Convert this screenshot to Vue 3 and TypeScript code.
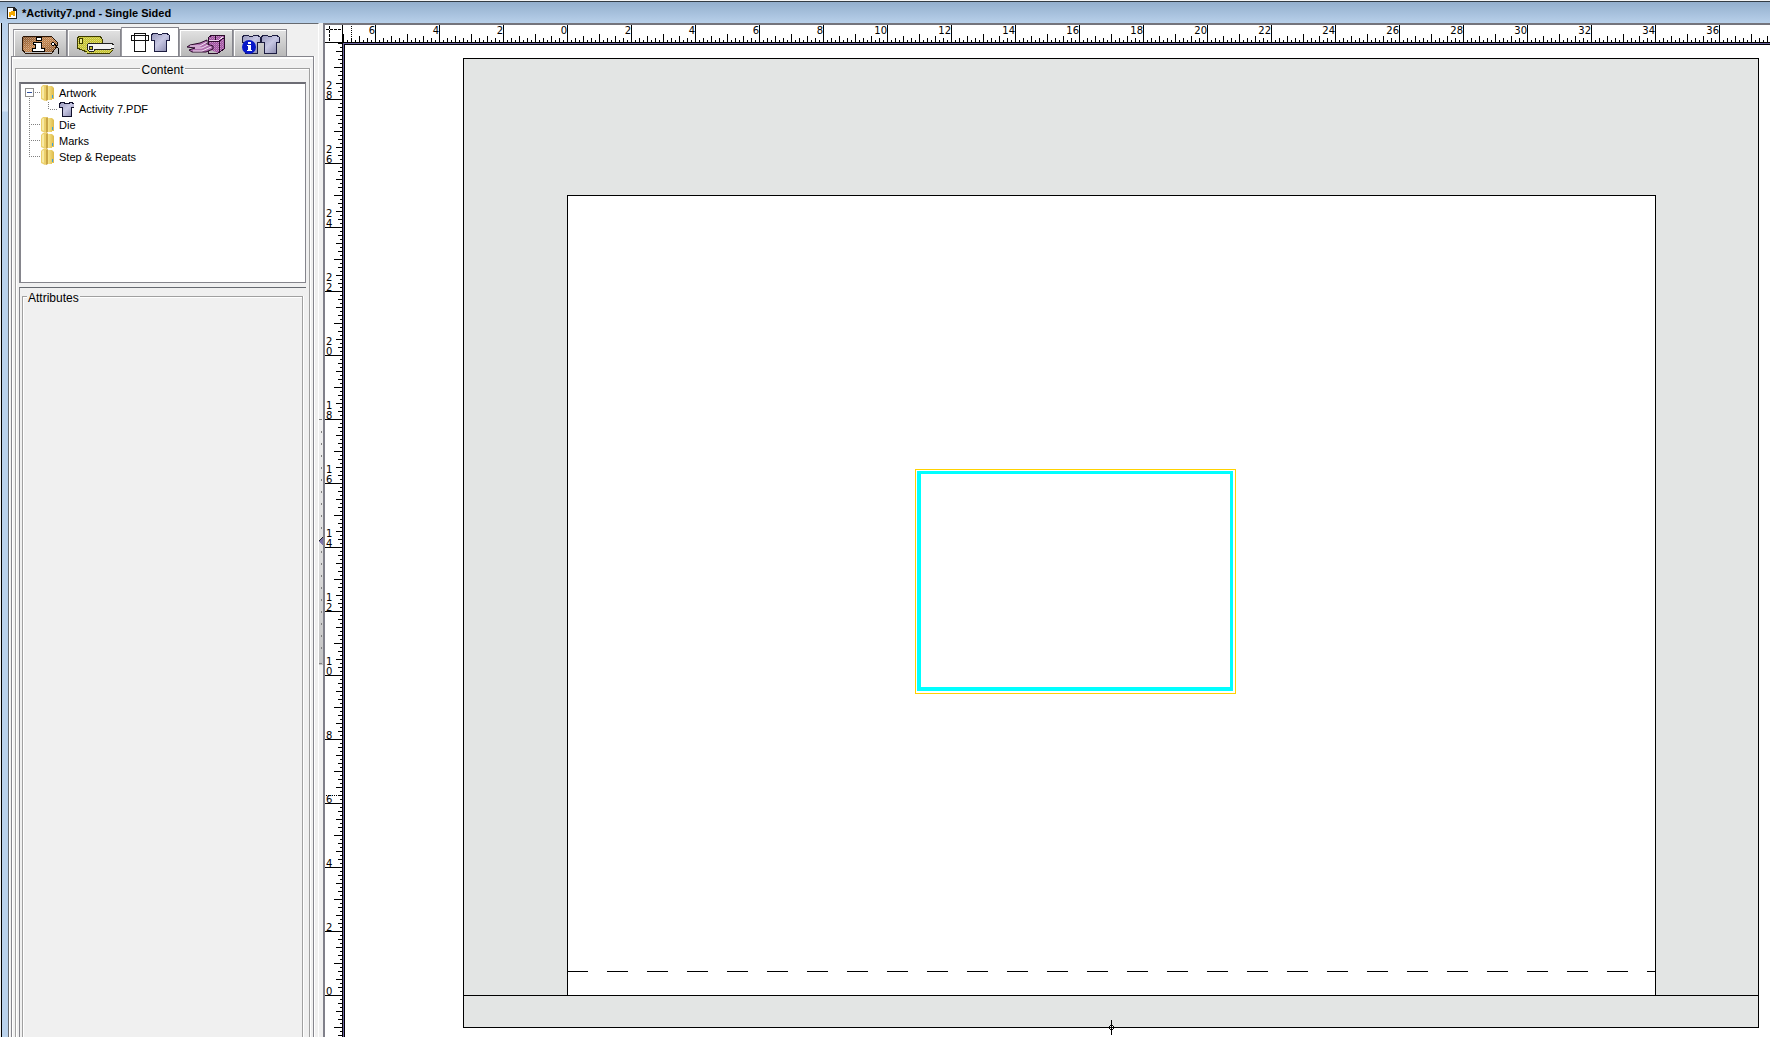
<script setup lang="ts">
import { computed, onBeforeUnmount, onMounted, ref } from 'vue'

interface Tick {
  pos: number
  len: number
  label: string
}

const INCH = 32
const STEP = INCH / 8

const viewW = ref(window.innerWidth)
const viewH = ref(window.innerHeight)

function onResize(): void {
  viewW.value = window.innerWidth
  viewH.value = window.innerHeight
}
onMounted(() => window.addEventListener('resize', onResize))
onBeforeUnmount(() => window.removeEventListener('resize', onResize))

const RULER_LEFT = 343
const RULER_TOP = 43
const ORIGIN_X = 224
const ORIGIN_Y = 952

function tickLength(eighths: number): number {
  if (eighths % 16 === 0) return 17
  if (eighths % 8 === 0) return 8
  if (eighths % 4 === 0) return 6
  if (eighths % 2 === 0) return 4
  return 2
}

function buildTicks(origin: number, extent: number, direction: 1 | -1): Tick[] {
  const ticks: Tick[] = []
  for (let pos = origin % STEP; pos < extent; pos += STEP) {
    const n = Math.abs(Math.round(((pos - origin) * direction) / STEP))
    ticks.push({ pos, len: tickLength(n), label: n % 16 === 0 ? String(n / 8) : '' })
  }
  return ticks
}

const hTicks = computed(() => buildTicks(ORIGIN_X, viewW.value - RULER_LEFT, 1))
const vTicks = computed(() => buildTicks(ORIGIN_Y, viewH.value - RULER_TOP, -1))
const hLabels = computed(() => hTicks.value.filter((t) => t.label))
const vLabels = computed(() =>
  vTicks.value
    .filter((t) => t.label)
    .flatMap((t) =>
      t.label.split('').map((digit, i, all) => ({
        key: `${t.pos}-${i}`,
        digit,
        y: t.pos - (all.length - 1 - i) * 10,
      })),
    ),
)

const folders = ['Die', 'Marks', 'Step & Repeats']
const grips = Array.from({ length: 19 }, (_, i) => 12 + i * 12)
const activeTab = ref(2)
const tabs = ['Job info', 'Media', 'Content', 'Packing', 'Content info']
</script>

<template>
  <div class="window">
    <svg width="0" height="0" class="defs" aria-hidden="true">
      <defs>
        <pattern id="dots" width="2" height="2" patternUnits="userSpaceOnUse">
          <rect width="1" height="1" fill="#fff" opacity="0.4" />
          <rect x="1" y="1" width="1" height="1" fill="#fff" opacity="0.2" />
        </pattern>
        <linearGradient id="brown" x1="0" y1="0" x2="1" y2="1">
          <stop offset="0" stop-color="#7c4a22" />
          <stop offset="0.5" stop-color="#c08048" />
          <stop offset="1" stop-color="#8a5428" />
        </linearGradient>
        <linearGradient id="shirtfill" x1="0" y1="0" x2="1" y2="1">
          <stop offset="0" stop-color="#9494b8" />
          <stop offset="0.5" stop-color="#c8c8e4" />
          <stop offset="1" stop-color="#8484a8" />
        </linearGradient>
        <linearGradient id="gold" x1="0" y1="0" x2="1" y2="0">
          <stop offset="0" stop-color="#f8e68c" />
          <stop offset="1" stop-color="#dcb848" />
        </linearGradient>
        <symbol id="shirt" viewBox="0 0 20 20">
          <g shape-rendering="crispEdges">
            <path d="M4 1H7L8 2H12L13 1H16L19 3V8H16V19H4V8H1V3Z" fill="url(#shirtfill)" />
            <path d="M4 1H7L8 2H12L13 1H16L19 3V8H16V19H4V8H1V3Z" fill="none" stroke="#1c1c40" />
          </g>
        </symbol>
        <symbol id="folder" viewBox="0 0 13 16">
          <path d="M0 2L2 0H6V15L4 16L0 14Z" fill="#ecd06c" />
          <path d="M1 2L3 1V14L1 13Z" fill="#f8eaa4" />
          <path d="M5 1L7 0V15L5 16Z" fill="#c9a546" />
          <path d="M7 1H11L13 3V14H11V15H7Z" fill="url(#gold)" />
          <path d="M11 10H12V13H11Z" fill="#3aa0e0" />
        </symbol>
      </defs>
    </svg>

    <header class="titlebar">
      <svg class="doc" width="10" height="12" viewBox="0 0 10 12" shape-rendering="crispEdges">
        <path d="M0 0H7L10 3V12H0Z" fill="#222" />
        <path d="M1 1H6V4H9V11H1Z" fill="#fff" />
        <path d="M2 5H4V4H8V9H6V8H4V10H2Z" fill="#f5a800" />
      </svg>
      <h1>*Activity7.pnd - Single Sided</h1>
    </header>

    <main class="body">
      <div class="frame"></div>

      <aside class="side">
        <nav class="tabs" role="tablist">
          <button
            v-for="(name, i) in tabs"
            :key="name"
            type="button"
            role="tab"
            class="tab"
            :class="{ active: activeTab === i }"
            :aria-label="name"
            :aria-selected="activeTab === i"
            @click="activeTab = i"
          >
            <svg v-if="i === 0" width="40" height="20" viewBox="0 0 40 20">
              <path d="M3 2H31L37 8V12L32 18H5L2 15V5Z" fill="url(#brown)" />
              <path d="M3 2H31L37 8V12L32 18H5L2 15V5Z" fill="url(#dots)" />
              <g shape-rendering="crispEdges">
                <path d="M2 15V4L4 2H31L37 8V12L32 19H5Z" fill="none" stroke="#2a1608" />
                <path d="M16 3H21V6H16ZM13 8H21V14H24V17H12V14H15V10H13Z" fill="#fff" stroke="#000" />
                <path d="M33 8L35 10L33 12L31 10Z" fill="#fff" stroke="#000" />
                <path d="M35 10L38 14L39 20" fill="none" stroke="#000" />
              </g>
            </svg>
            <svg v-else-if="i === 1" width="40" height="20" viewBox="0 0 40 20">
              <path d="M5 2H26L28 5V9H36L38 12V17L36 19H12L10 16H7L3 13V5Z" fill="#c4c22c" />
              <path d="M5 2H26L28 5V9H36L38 12V17L36 19H12L10 16H7L3 13V5Z" fill="url(#dots)" />
              <g shape-rendering="crispEdges">
                <path d="M5 2H26L28 5V9M13 19H36L39 16M3 5V14L13 18M5 2L3 5M8 4V10" fill="none" stroke="#3c3c00" />
                <path d="M5 4H8V9H5Z" fill="#eeee90" stroke="#3c3c00" />
                <path d="M15 9H37L40 11V14L37 15H21L20 17H15L13 15V11Z" fill="#f2f2f2" stroke="#222" />
                <path d="M15 12H18V15H15Z" fill="#c9c832" stroke="#222" />
              </g>
            </svg>
            <svg v-else-if="i === 2" width="40" height="20" viewBox="0 0 40 20">
              <g fill="none" stroke="#111" shape-rendering="crispEdges">
                <path d="M4 1H15V19H4ZM1 3H18V8H1Z" />
              </g>
              <use href="#shirt" x="20" y="0" width="20" height="20" />
            </svg>
            <svg v-else-if="i === 3" width="40" height="20" viewBox="0 0 40 20">
              <path d="M22 4L26 1H38V15L32 19L22 15Z" fill="#a050a0" />
              <path d="M22 4L26 1H38V15L32 19L22 15Z" fill="url(#dots)" />
              <g shape-rendering="crispEdges">
                <path d="M22 4L26 1H38V15L32 19H22Z" fill="none" stroke="#2c0c2c" />
                <path d="M22 7H33L38 4M33 7V19M29 1V7" fill="none" stroke="#2c0c2c" />
                <path d="M23 6H33L37 3" fill="none" stroke="#f0d8f0" />
              </g>
              <path d="M4 11L14 9L21 6V10L27 12V15L20 18H6L3 16L9 14L1 13Z" fill="#b070b0" stroke="#2c0c2c" />
              <path d="M4 12H14L21 8M9 14H16L22 11M7 17H16L25 13" fill="none" stroke="#f4e4f4" />
            </svg>
            <svg v-else width="40" height="20" viewBox="0 0 40 20">
              <use href="#shirt" x="1" y="0" width="20" height="20" />
              <use href="#shirt" x="20" y="0" width="20" height="20" />
              <circle cx="9" cy="13" r="7" fill="#0818c8" />
              <path d="M8 8H11V10H8ZM7 11H11V16H12V17H7V16H8V12H7Z" fill="#fff" shape-rendering="crispEdges" />
            </svg>
          </button>
        </nav>

        <section class="panel">
          <fieldset class="group content">
            <legend>Content</legend>
            <ul class="tree">
              <li>
                <svg width="20" height="16" shape-rendering="crispEdges">
                  <rect x="4" y="3" width="9" height="9" fill="#8c8c8c" />
                  <rect x="5" y="4" width="7" height="7" fill="#fff" />
                  <rect x="6" y="7" width="5" height="1" fill="#3050a0" />
                  <rect v-for="x in [14, 16, 18]" :key="x" :x="x" y="7" width="1" height="1" fill="#808080" />
                  <rect v-for="y in [13, 15]" :key="y" x="8" :y="y" width="1" height="1" fill="#808080" />
                </svg>
                <svg width="13" height="16"><use href="#folder" /></svg>
                <span>Artwork</span>
              </li>
              <li>
                <svg width="37" height="16" shape-rendering="crispEdges">
                  <rect v-for="y in 8" :key="y" x="8" :y="y * 2 - 1" width="1" height="1" fill="#808080" />
                  <rect v-for="y in 4" :key="y" x="27" :y="y * 2 - 1" width="1" height="1" fill="#808080" />
                  <rect v-for="x in 4" :key="x" :x="27 + x * 2" y="8" width="1" height="1" fill="#808080" />
                </svg>
                <svg width="16" height="16" viewBox="0 0 16 16" shape-rendering="crispEdges">
                  <path
                    d="M4 1H6V2H11V1H13L16 3V6H13V15H4V6H1V3Z"
                    fill="url(#shirtfill)"
                    stroke="#10102c"
                  />
                </svg>
                <span>Activity 7.PDF</span>
              </li>
              <li v-for="(name, i) in folders" :key="name">
                <svg width="20" height="16" shape-rendering="crispEdges">
                  <rect
                    v-for="y in i === 2 ? 4 : 8"
                    :key="y"
                    x="8"
                    :y="y * 2 - 1"
                    width="1"
                    height="1"
                    fill="#808080"
                  />
                  <rect v-for="x in 5" :key="x" :x="8 + x * 2" y="7" width="1" height="1" fill="#808080" />
                </svg>
                <svg width="13" height="16"><use href="#folder" /></svg>
                <span>{{ name }}</span>
              </li>
            </ul>
            <div class="attrs">
              <fieldset class="group inner">
                <legend>Attributes</legend>
              </fieldset>
            </div>
          </fieldset>
        </section>
      </aside>

      <div class="splitter">
        <svg width="4" height="246" shape-rendering="crispEdges">
          <defs>
            <linearGradient id="slide" x1="0" y1="0" x2="0" y2="1">
              <stop offset="0" stop-color="#f0f0f0" />
              <stop offset="0.5" stop-color="#e0e0e0" />
              <stop offset="1" stop-color="#c4c4c4" />
            </linearGradient>
          </defs>
          <rect width="4" height="246" fill="url(#slide)" />
          <path d="M0 0H3V1H0ZM0 244H3V245H0Z" fill="#808080" />
          <rect v-for="y in grips" :key="y" x="2" :y="y" width="1" height="2" fill="#808080" />
          <path d="M4 118V127L0 123Z" fill="#7c74a8" />
          <path d="M3 118H4V119H3ZM2 119H3V120H2ZM1 120H2V121H1ZM0 121H1V122H0Z" fill="#222" />
        </svg>
      </div>

      <section class="editor">
        <svg class="corner" width="18" height="18" shape-rendering="crispEdges">
          <path d="M4.500 1V17" stroke="#000" stroke-dasharray="3 1" />
          <path d="M1 4.500H17" stroke="#000" stroke-dasharray="3 1" />
          <path d="M17 0H18V18H0V17H17Z" />
        </svg>
        <svg class="hruler" width="100%" height="18" shape-rendering="crispEdges">
          <rect v-for="t in hTicks" :key="t.pos" :x="t.pos" :y="17 - t.len" width="1" :height="t.len" />
          <rect v-for="n in 8" :key="n" x="8" :y="n * 2 - 1" width="1" height="1" />
          <rect x="0" y="17" width="100%" height="1" />
          <text v-for="t in hLabels" :key="t.pos" :x="t.pos" y="9" text-anchor="end">{{ t.label }}</text>
        </svg>
        <svg class="vruler" width="18" height="100%" shape-rendering="crispEdges">
          <rect v-for="t in vTicks" :key="t.pos" :x="17 - t.len" :y="t.pos" :width="t.len" height="1" />
          <rect v-for="n in 8" :key="n" :x="n * 2 - 1" y="752" width="1" height="1" />
          <rect x="17" y="0" width="1" height="100%" />
          <text v-for="l in vLabels" :key="l.key" x="1" :y="l.y">{{ l.digit }}</text>
        </svg>
        <div class="canvas">
          <div class="plate">
            <div class="sheet">
              <svg class="gripper" width="100%" height="1" shape-rendering="crispEdges">
                <path d="M-1 0H4000" stroke="#000" stroke-width="2" stroke-dasharray="21 19" />
              </svg>
            </div>
            <div class="tail"></div>
            <div class="artwork"><div class="bleed"></div></div>
            <svg class="center" width="7" height="15" viewBox="0 0 7 15" shape-rendering="crispEdges">
              <path d="M2 5H5V6H6V9H5V10H2V9H1V6H2Z" />
              <path d="M2 6H3V7H2ZM4 6H5V7H4ZM2 8H3V9H2ZM4 8H5V9H4Z" fill="#fff" />
              <rect x="3" y="0" width="1" height="15" />
            </svg>
          </div>
        </div>
      </section>
    </main>
  </div>
</template>

<style>
body {
  margin: 0;
  overflow: hidden;
}
</style>

<style scoped>
.window {
  display: flex;
  flex-direction: column;
  height: 100vh;
  overflow: hidden;
  background: #f0f0f0;
  color: #000;
  font-family: "Liberation Sans", Arial, sans-serif;
  font-size: 12px;
}
svg {
  display: block;
  flex: none;
}
.defs {
  position: absolute;
}
.titlebar {
  display: flex;
  flex: none;
  align-items: center;
  gap: 5px;
  box-sizing: border-box;
  height: 23px;
  padding: 2px 0 0 7px;
  border-top: 1px solid #f4f4f4;
  background: linear-gradient(#333c44 1px, #93afcd 1px, #b8d0ea);
}
.titlebar h1 {
  margin: 0;
  font-size: 11px;
  line-height: 16px;
  font-weight: bold;
}
.body {
  display: flex;
  flex: 1;
  min-height: 0;
}
.frame {
  flex: none;
  width: 6px;
  border-left: 1px solid #000;
  margin-left: 1px;
  background: linear-gradient(#b8d0ea, #d3e3f5 88px, #bad2ec 89px);
}
.side {
  display: flex;
  flex-direction: column;
  flex: none;
  box-sizing: border-box;
  width: 311px;
  border-top: 1px solid #666a70;
  border-left: 1px solid #666a70;
  border-right: 1px solid #fff;
  padding: 3px 4px 0 2px;
  box-shadow: inset 1px 0 #fff;
}
.tabs {
  display: flex;
  align-items: flex-end;
  height: 30px;
  padding-left: 2px;
  margin-bottom: -1px;
}
.tab {
  display: flex;
  justify-content: center;
  box-sizing: border-box;
  width: 54px;
  height: 28px;
  margin: 0;
  padding: 4px 0 0;
  border: 1px solid #85858c;
  border-left-color: #9a9aa0;
  background: linear-gradient(#e2e2e2, #b9b9b9);
  box-shadow: inset 1px 1px #fff;
}
.tab.active {
  width: 58px;
  height: 30px;
  border-bottom-color: #fff;
  background: #fff;
}
.panel {
  display: flex;
  flex: 1;
  min-height: 0;
  padding: 3px 3px 0;
  border: 1px solid #85858c;
  border-bottom: 0;
  box-shadow: inset 1px 2px #fff, 1px 0 #fff;
}
.group {
  display: flex;
  flex-direction: column;
  flex: 1;
  min-width: 0;
  box-sizing: border-box;
  margin: 0;
  border: 1px solid #a0a0a0;
  border-bottom: 0;
  box-shadow: inset 1px 1px #fff, 1px 0 #fff;
}
legend {
  padding: 4px 1px 0;
  background: #f0f0f0;
  line-height: 12px;
}
.content {
  padding: 6px 3px 0;
}
.content > legend {
  margin: 0 auto;
}
.tree {
  box-sizing: border-box;
  height: 201px;
  margin: 0 0 4px;
  padding: 1px 0 0;
  list-style: none;
  border: 1px solid #85858c;
  border-top: 2px solid #6c6c74;
  border-left-width: 2px;
  background: #fff;
  font-size: 11px;
  line-height: 16px;
}
.tree li {
  display: flex;
  height: 16px;
}
.tree span {
  padding-left: 5px;
}
.attrs {
  display: flex;
  flex: 1;
  padding: 0 3px 0 2px;
  border-top: 1px solid #666a70;
  border-left: 1px solid #85858c;
}
.inner {
  padding: 0 4px;
}
.splitter {
  flex: none;
  width: 4px;
  padding-top: 396px;
}
.editor {
  display: grid;
  grid-template-columns: 18px minmax(0, 1fr);
  grid-template-rows: 18px minmax(0, 1fr);
  flex: 1;
  min-width: 0;
  border-top: 2px solid #74747c;
  border-left: 2px solid #80808a;
  background: #fff;
}
.editor text {
  font-family: "DejaVu Sans", Verdana, sans-serif;
  font-size: 10px;
}
.canvas {
  position: relative;
  overflow: hidden;
  border-top: 1px solid #6a62a0;
  border-left: 1px solid #6a62a0;
  box-shadow: inset 1px 1px #000;
}
.plate {
  position: absolute;
  left: 119px;
  top: 14px;
  box-sizing: border-box;
  width: 1296px;
  height: 970px;
  border: 1px solid #000;
  background: #e3e5e4;
}
.sheet {
  position: absolute;
  left: 103px;
  top: 136px;
  box-sizing: border-box;
  width: 1089px;
  height: 801px;
  border: 1px solid #000;
  background: #fff;
}
.gripper {
  position: absolute;
  left: 0;
  bottom: 23px;
}
.tail {
  position: absolute;
  left: 0;
  right: 0;
  bottom: 31px;
  border-top: 1px solid #000;
}
.artwork {
  position: absolute;
  left: 451px;
  top: 410px;
  box-sizing: border-box;
  width: 321px;
  height: 225px;
  padding: 1px 2px 2px 1px;
  border: 1px solid #ffd200;
}
.bleed {
  box-sizing: border-box;
  height: 100%;
  border: 3px solid #00ffff;
  border-bottom-width: 4px;
  border-left-width: 4px;
}
.center {
  position: absolute;
  left: 644px;
  bottom: -8px;
}
</style>
